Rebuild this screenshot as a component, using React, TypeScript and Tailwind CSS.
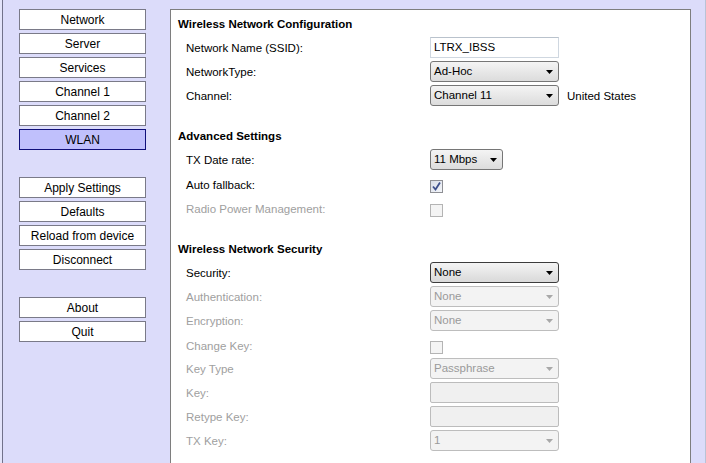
import React from "react";

const FONT = { fontFamily: '"Liberation Sans", Arial, sans-serif' };

function NavButton({ label, active }: { label: string; active?: boolean }) {
    return (
        <div
            className={
                "h-[21px] flex items-center justify-center pt-[1px] text-[12px] text-black border " +
                (active ? "bg-[#c0c0fc] border-[#10107a]" : "bg-white border-[#7a7a88]")
            }
        >
            {label}
        </div>
    );
}

function Arrow({ disabled }: { disabled?: boolean }) {
    return (
        <svg width="7" height="4" viewBox="0 0 7 4" className="shrink-0">
            <polygon points="0,0 7,0 3.5,4" fill={disabled ? "#a8a8a8" : "#000"} />
        </svg>
    );
}

function Select({
    value,
    width = "w-[129px]",
    disabled,
    focused,
}: {
    value: string;
    width?: string;
    disabled?: boolean;
    focused?: boolean;
}) {
    const tone = disabled
        ? "bg-[#f3f3f3] border-[#bdbdbd] text-[#9a9a9a]"
        : focused
        ? "bg-gradient-to-b from-[#f4f4f4] to-[#d9d9d9] border-[#3c3c3c] text-black"
        : "bg-gradient-to-b from-[#f4f4f4] to-[#dcdcdc] border-[#767676] text-black";
    return (
        <div className={`${width} h-[21px] rounded-[3px] border flex items-center justify-between pl-[3px] pr-[5px] text-[11.5px] ${tone}`}>
            <span className="pt-[1px]">{value}</span>
            <Arrow disabled={disabled} />
        </div>
    );
}

function TextInput({ value, disabled }: { value?: string; disabled?: boolean }) {
    return (
        <div
            className={
                "w-[129px] h-[21px] border flex items-center pl-[3px] pt-[1px] text-[11.5px] " +
                (disabled ? "bg-[#f0f0f0] border-[#bcbcbc] rounded-[2px]" : "bg-white border-[#cfd7e0] border-t-[#b9c2cc] text-black")
            }
        >
            {value}
        </div>
    );
}

function Checkbox({ checked, disabled }: { checked?: boolean; disabled?: boolean }) {
    return (
        <div
            className={
                "w-[13px] h-[13px] border flex items-center justify-center " +
                (disabled ? "bg-[#f4f4f4] border-[#b4b4b4]" : "bg-gradient-to-br from-[#d8dde8] to-[#f4f6fa] border-[#8e8f94]")
            }
        >
            {checked && (
                <svg width="11" height="11" viewBox="0 0 11 11">
                    <path d="M2 5.5 L4.5 8.5 L9 1.5" fill="none" stroke="#3d4f8c" strokeWidth="1.8" />
                </svg>
            )}
        </div>
    );
}

function Row({
    label,
    disabled,
    children,
    extra,
}: {
    label: string;
    disabled?: boolean;
    children: React.ReactNode;
    extra?: string;
}) {
    return (
        <div className="h-[24px] flex items-start">
            <div className={"w-[259px] h-[21px] flex items-center pl-[15px] pt-[2px] text-[11.5px] " + (disabled ? "text-[#a0a0a0]" : "text-black")}>
                {label}
            </div>
            {children}
            {extra && <div className="h-[21px] flex items-center ml-[8px] pt-[2px] text-[11.5px] text-black">{extra}</div>}
        </div>
    );
}

function CheckRow({ label, checked, disabled }: { label: string; checked?: boolean; disabled?: boolean }) {
    return (
        <div className="h-[24px] flex items-center">
            <div className={"w-[259px] pl-[15px] pt-[2px] text-[11.5px] " + (disabled ? "text-[#a0a0a0]" : "text-black")}>{label}</div>
            <div className="pt-[3px]">
                <Checkbox checked={checked} disabled={disabled} />
            </div>
        </div>
    );
}

function Heading({ text, top }: { text: string; top: string }) {
    return <div className={`${top} mb-[5px] h-[18px] flex items-center pl-[7px] pt-[4px] text-[11.5px] font-bold text-black`}>{text}</div>;
}

export default function App() {
    return (
        <div className="w-[706px] h-[463px] overflow-hidden bg-[#dcdcfa] flex" style={FONT}>
            <div className="w-[2px] bg-[#e4e4fa]" />
            <div className="w-px bg-[#72728a]" />

            {/* sidebar */}
            <div className="ml-[16px] w-[127px] pt-[9px] flex flex-col gap-[3px]">
                <NavButton label="Network" />
                <NavButton label="Server" />
                <NavButton label="Services" />
                <NavButton label="Channel 1" />
                <NavButton label="Channel 2" />
                <NavButton label="WLAN" active />
                <div className="h-[21px]" />
                <NavButton label="Apply Settings" />
                <NavButton label="Defaults" />
                <NavButton label="Reload from device" />
                <NavButton label="Disconnect" />
                <div className="h-[21px]" />
                <NavButton label="About" />
                <NavButton label="Quit" />
            </div>

            {/* main panel */}
            <div className="ml-[24px] mt-[9px] w-[521px] h-[480px] bg-white border border-b-0 border-[#7e7e7e] pt-[4px]">
                <Heading text="Wireless Network Configuration" top="mt-0" />
                <Row label="Network Name (SSID):">
                    <TextInput value="LTRX_IBSS" />
                </Row>
                <Row label="NetworkType:">
                    <Select value="Ad-Hoc" />
                </Row>
                <Row label="Channel:" extra="United States">
                    <Select value="Channel 11" />
                </Row>

                <Heading text="Advanced Settings" top="mt-[17px]" />
                <Row label="TX Date rate:">
                    <Select value="11 Mbps" width="w-[73px]" />
                </Row>
                <CheckRow label="Auto fallback:" checked />
                <CheckRow label="Radio Power Management:" disabled />

                <Heading text="Wireless Network Security" top="mt-[18px]" />
                <Row label="Security:">
                    <Select value="None" focused />
                </Row>
                <Row label="Authentication:" disabled>
                    <Select value="None" disabled />
                </Row>
                <Row label="Encryption:" disabled>
                    <Select value="None" disabled />
                </Row>
                <CheckRow label="Change Key:" disabled />
                <Row label="Key Type" disabled>
                    <Select value="Passphrase" disabled />
                </Row>
                <Row label="Key:" disabled>
                    <TextInput disabled />
                </Row>
                <Row label="Retype Key:" disabled>
                    <TextInput disabled />
                </Row>
                <Row label="TX Key:" disabled>
                    <Select value="1" disabled />
                </Row>
            </div>

            <div className="flex-1" />
            <div className="w-px bg-[#b9c3d6]" />
        </div>
    );
}
